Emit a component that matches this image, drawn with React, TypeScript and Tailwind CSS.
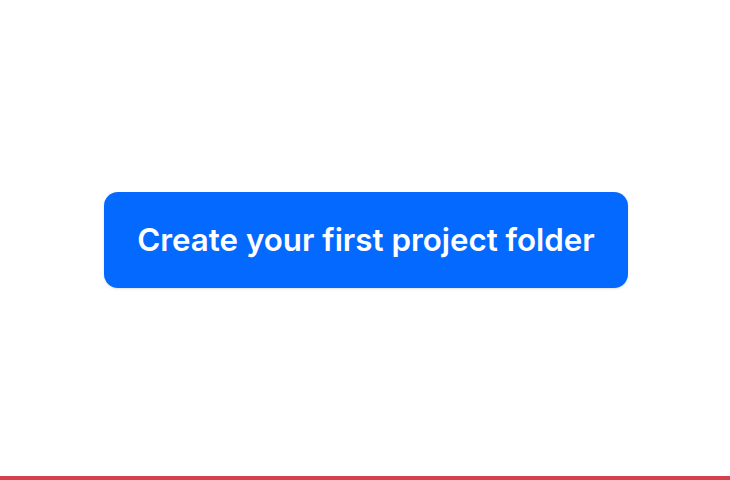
import React from "react";

export default function App() {
  return (
    <div className="flex h-[480px] w-[730px] flex-col bg-white" style={{ fontFamily: "Inter, 'Noto Sans', sans-serif" }}>
      <main className="flex flex-1 items-center justify-center pl-[2px] pt-1">
        <button className="flex h-[96px] w-[524px] items-center justify-center rounded-[14px] bg-[#0469ff] text-[31.3px] font-semibold text-white shadow-sm">
          Create your first project folder
        </button>
      </main>
      <div className="h-1 w-full bg-[#d4414c]" />
    </div>
  );
}
